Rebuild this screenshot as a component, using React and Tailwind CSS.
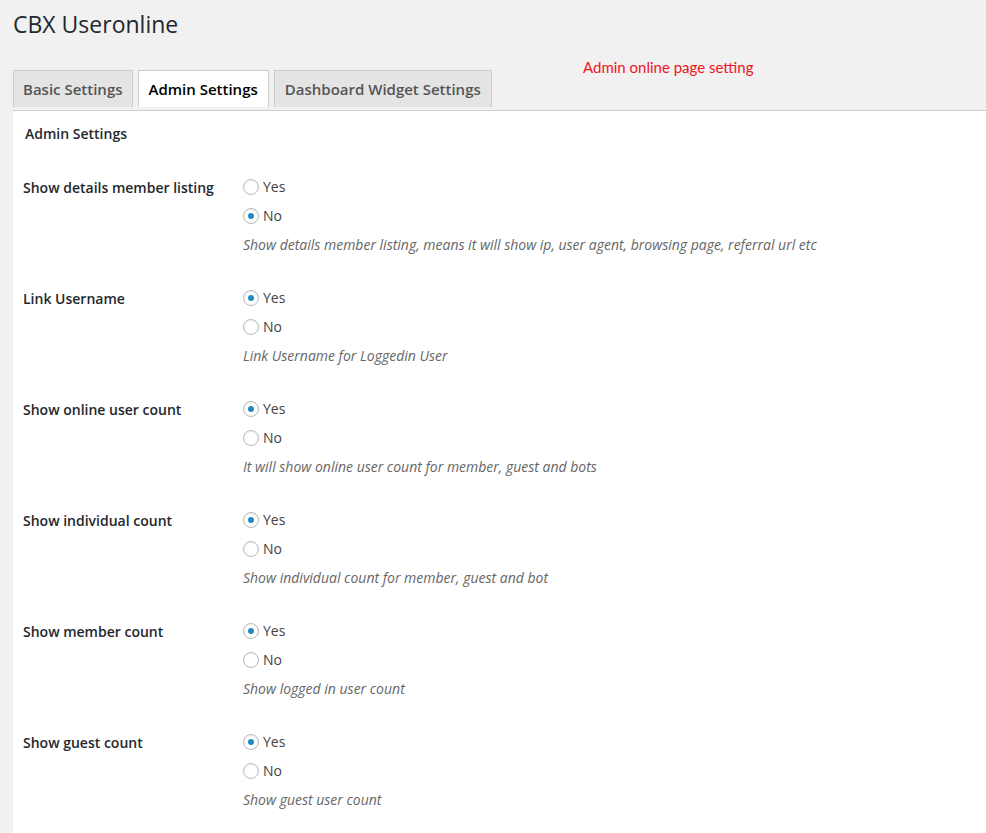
const rows = [
  {
    label: "Show details member listing",
    value: "no",
    desc: "Show details member listing, means it will show ip, user agent, browsing page, referral url etc",
  },
  { label: "Link Username", value: "yes", desc: "Link Username for Loggedin User" },
  {
    label: "Show online user count",
    value: "yes",
    desc: "It will show online user count for member, guest and bots",
  },
  {
    label: "Show individual count",
    value: "yes",
    desc: "Show individual count for member, guest and bot",
  },
  { label: "Show member count", value: "yes", desc: "Show logged in user count" },
  { label: "Show guest count", value: "yes", desc: "Show guest user count" },
];

function Radio({ checked, label }) {
  return (
    <label className="flex items-center h-[29px] gap-[4px] text-[14px] text-[#444]">
      <span className="w-[16px] h-[16px] rounded-full border border-[#b4b9be] bg-white shadow-[inset_0_1px_2px_rgba(0,0,0,0.07)] flex items-center justify-center">
        {checked && <span className="w-[6px] h-[6px] rounded-full bg-[#1e8cbe]" />}
      </span>
      <span>{label}</span>
    </label>
  );
}

export default function App() {
  return (
    <div
      className="relative min-h-[833px] bg-[#f1f1f1] text-[#23282d]"
      style={{ fontFamily: '"Open Sans", sans-serif' }}
    >
      {/* HEADER */}
      <h1 className="pl-[13px] pt-[8px] text-[23px] leading-[32px] font-normal">
        CBX Useronline
      </h1>

      <p
        className="absolute left-[583px] top-[58px] text-[15px] leading-[18px] text-[#f0141e]"
        style={{ fontFamily: "Lato, sans-serif" }}
      >
        Admin online page setting
      </p>

      {/* TABS */}
      <div className="flex gap-[5px] pl-[13px] mt-[30px]">
        <div className="h-[37px] px-[9px] flex items-center border border-b-0 border-[#ccc] bg-[#e4e4e4] text-[15px] font-semibold text-[#555]">
          Basic Settings
        </div>
        <div className="h-[37px] px-[10px] flex items-center border border-b-0 border-[#ccc] bg-white text-[15px] font-semibold text-[#000]">
          Admin Settings
        </div>
        <div className="h-[37px] px-[10px] flex items-center border border-b-0 border-[#ccc] bg-[#e4e4e4] text-[15px] font-semibold text-[#555]">
          Dashboard Widget Settings
        </div>
      </div>

      {/* PANEL */}
      <div className="ml-[13px] mt-[3px] border-t border-[#ccc] bg-white pb-[20px]">
        <h2 className="pl-[12px] pt-[13px] text-[14px] leading-[20px] font-semibold">
          Admin Settings
        </h2>

        <div className="mt-[28px] flex flex-col gap-[24px]">
          {rows.map((row) => (
            <div key={row.label} className="flex">
              <div className="w-[230px] pl-[10px] pt-[6px] text-[14px] leading-[20px] font-semibold">
                {row.label}
              </div>
              <div className="flex flex-col">
                <Radio checked={row.value === "yes"} label="Yes" />
                <Radio checked={row.value === "no"} label="No" />
                <p className="h-[29px] flex items-center text-[14px] italic text-[#666]">
                  {row.desc}
                </p>
              </div>
            </div>
          ))}
        </div>
      </div>
    </div>
  );
}
